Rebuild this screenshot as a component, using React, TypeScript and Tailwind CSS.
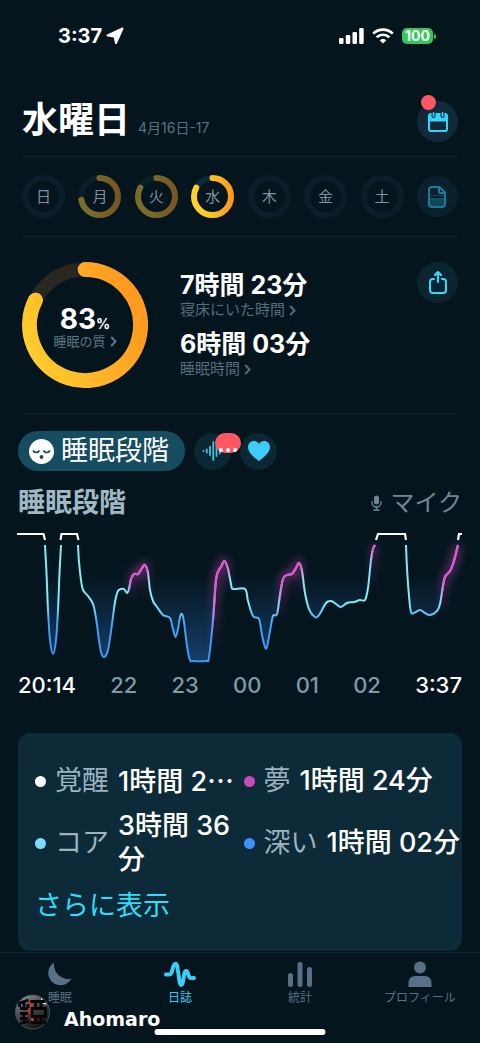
import { useState } from 'react';
import type { ReactNode } from 'react';

type Point = [number, number];

const days = [
  { label: '日', score: 0 },
  { label: '月', score: 72 },
  { label: '火', score: 83 },
  { label: '水', score: 83 },
  { label: '木', score: 0 },
  { label: '金', score: 0 },
  { label: '土', score: 0 },
];

const hours = ['20:14', '22', '23', '00', '01', '02', '3:37'];

const sleepRuns: Point[][] = [
  [[28, 17], [29.5, 45], [31, 82], [33, 112], [36, 126], [39, 112], [41, 82], [42.5, 45], [44, 17]],
  [
    [61, 17], [62, 34], [64, 52], [66, 62], [71, 68], [76, 76], [79, 90], [82, 112], [84, 124], [87, 129], [91, 122],
    [95, 96], [98, 74], [101, 63], [104, 61], [107, 61], [110, 65], [112, 61], [114, 51], [117, 46], [121, 46],
    [125, 40], [128, 37], [131, 45], [133, 62], [136, 73], [140, 79], [146, 87], [153, 90], [156, 101], [158.5, 109],
    [161, 101], [163, 89], [165, 86], [167, 94], [170, 118], [173, 132], [176, 133], [189, 133], [192, 129],
    [196, 92], [199, 52], [202, 42], [204, 39], [207.5, 33], [211, 41], [214, 56], [216, 61], [228, 61], [231, 73],
    [236, 88], [242, 91], [245, 107], [248, 119], [250, 119], [253, 103], [256, 88], [260, 86], [263, 67], [266, 51],
    [270, 47], [275, 46], [279, 40], [282, 35], [285, 43], [288, 65], [292, 81], [298, 89], [302, 87], [309, 75],
    [314, 73], [319, 76], [324, 79], [330, 75], [337, 74], [343, 72], [348, 72], [351, 60], [354, 32], [356, 21],
    [358, 17],
  ],
  [
    [389, 17], [390, 40], [392, 68], [394, 84], [397, 85], [403, 82], [408, 85], [413, 87], [420, 83], [423, 76],
    [426, 58], [428, 49], [433, 43], [436, 36], [439, 25], [441, 17],
  ],
];

const awakeRuns = ['M0 6H26.5L28 12', 'M43.500 12L44.500 6H60L61.500 12', 'M359 12L361 6H388L389 12', 'M441 12L442 6H445'];

// x positions where the line fades in and out of dream sleep
const dreamRanges = [
  [111, 114, 130, 132],
  [195, 198, 210, 213],
  [261, 265, 284, 286],
  [353, 356, 360, 361],
  [423, 427, 443, 445],
];

const CHART_WIDTH = 445;
const CHART_HEIGHT = 136;

// Catmull-Rom through the samples
function toPath(points: Point[]) {
  let d = `M${points[0][0]} ${points[0][1]}`;
  for (let i = 0; i < points.length - 1; i++) {
    const p0 = points[i - 1] || points[i];
    const p1 = points[i];
    const p2 = points[i + 1];
    const p3 = points[i + 2] || p2;
    d += `C${p1[0] + (p2[0] - p0[0]) / 6} ${p1[1] + (p2[1] - p0[1]) / 6} ${p2[0] - (p3[0] - p1[0]) / 6} ${
      p2[1] - (p3[1] - p1[1]) / 6
    } ${p2[0]} ${p2[1]}`;
  }
  return d;
}

function StatusBar() {
  return (
    <div className="h-[72px] pl-[58px] pr-11 flex items-center justify-between text-white">
      <div className="flex items-center gap-1">
        <span className="text-xl leading-6 font-bold">3:37</span>
        <svg width="18" height="18" viewBox="0 0 18 18" fill="currentColor" stroke="currentColor" strokeLinejoin="round">
          <path d="M16.500 1.500 10 16 8.500 9.500 1.500 8.500Z" strokeWidth="2" />
        </svg>
      </div>
      <div className="flex items-center gap-2">
        <svg width="25" height="16" viewBox="0 0 25 16" fill="currentColor">
          <rect x="0" y="10" width="4.500" height="6" rx="1.300" />
          <rect x="6.800" y="7" width="4.500" height="9" rx="1.300" />
          <rect x="13.500" y="4" width="4.500" height="12" rx="1.300" />
          <rect x="20.200" y="0" width="4.500" height="16" rx="1.300" />
        </svg>
        <svg width="22" height="16" viewBox="0 0 22 16" fill="none" stroke="currentColor" strokeWidth="2.700">
          <path d="M1.200 5.600a14 14 0 0 1 19.600 0" />
          <path d="M4.700 9.300a9 9 0 0 1 12.600 0" />
          <path d="M11 15.600 7.700 12.200a4.800 4.800 0 0 1 6.600 0Z" fill="currentColor" stroke="none" />
        </svg>
        <div className="flex items-center gap-px">
          <span className="h-4 w-[31px] rounded-[5px] bg-[#34c759] text-center text-sm leading-4 font-bold">100</span>
          <span className="h-[5px] w-0.5 rounded-r-full bg-[#34c759]" />
        </div>
      </div>
    </div>
  );
}

function Chevron() {
  return (
    <svg width="7" height="11" viewBox="0 0 7 11" fill="none" stroke="currentColor" strokeWidth="2">
      <path d="m1.200 1 4.300 4.500L1.200 10" />
    </svg>
  );
}

function DayRing({ label, score, selected, onClick }: { label: string; score: number; selected: boolean; onClick: () => void }) {
  return (
    <button onClick={onClick} className="grid size-[43px] place-items-center">
      <svg viewBox="0 0 43 43" className="col-start-1 row-start-1 size-full -rotate-90" fill="none" strokeWidth="6">
        <circle cx="21.500" cy="21.500" r="18.500" stroke={selected ? '#0d2838' : '#0a1e29'} />
        {score > 0 && (
          <circle
            cx="21.500"
            cy="21.500"
            r="18.500"
            pathLength="100"
            strokeDasharray={`${score} 100`}
            strokeLinecap="round"
            stroke="url(#day-gradient)"
            opacity={selected ? 1 : 0.45}
          />
        )}
      </svg>
      <span className="col-start-1 row-start-1 text-[15px] leading-5 text-[#7d929e]">{label}</span>
    </button>
  );
}

function QualityRing() {
  return (
    <div className="grid size-[126px] shrink-0 place-items-center">
      <svg viewBox="0 0 126 126" className="col-start-1 row-start-1 size-full" fill="none">
        <defs>
          <linearGradient id="quality-gradient" gradientUnits="userSpaceOnUse" x1="8" y1="85" x2="112" y2="40">
            <stop offset="0" stopColor="#ffcb2e" />
            <stop offset="1" stopColor="#ff9a20" />
          </linearGradient>
        </defs>
        <circle cx="63" cy="63" r="55.500" stroke="#2a2721" strokeWidth="14" />
        <path d="M63 7.500a55.500 55.500 0 1 1-49.500 30.500" stroke="#04151e" strokeWidth="17" strokeLinecap="round" />
        <path d="M63 7.500a55.500 55.500 0 1 1-49.500 30.500" stroke="url(#quality-gradient)" strokeWidth="15" strokeLinecap="round" />
      </svg>
      <div className="col-start-1 row-start-1 flex flex-col items-center pt-1">
        <div className="text-[28px] leading-7 font-bold text-white">
          83<span className="text-sm leading-4">%</span>
        </div>
        <button className="flex items-center gap-1 text-[13px] leading-4 text-[#5d7685]">
          睡眠の質
          <Chevron />
        </button>
      </div>
    </div>
  );
}

function Duration({ value, label }: { value: string; label: string }) {
  return (
    <div>
      <div className="text-[25px] leading-[34px] font-bold text-white">{value}</div>
      <button className="flex items-center gap-1 text-[15px] leading-4 text-[#546d7c]">
        {label}
        <Chevron />
      </button>
    </div>
  );
}

function SleepChart() {
  return (
    <svg viewBox={`1 0 ${CHART_WIDTH - 1} ${CHART_HEIGHT}`} className="mt-[5px] block w-full overflow-visible" fill="none">
      <defs>
        <linearGradient id="depth" gradientUnits="userSpaceOnUse" x1="0" y1="0" x2="0" y2={CHART_HEIGHT}>
          <stop offset="0.550" stopColor="#7debf8" />
          <stop offset="0.700" stopColor="#479ff6" />
          <stop offset="1" stopColor="#3f93f5" />
        </linearGradient>
        <linearGradient id="depth-fill" gradientUnits="userSpaceOnUse" x1="0" y1="0" x2="0" y2={CHART_HEIGHT}>
          <stop offset="0.350" stopColor="#17426f" stopOpacity="0" />
          <stop offset="1" stopColor="#17426f" stopOpacity="0.950" />
        </linearGradient>
        <linearGradient id="dream" gradientUnits="userSpaceOnUse" x1="0" y1="0" x2={CHART_WIDTH} y2="0">
          {dreamRanges.flatMap((range) =>
            range.map((x, i) => (
              <stop key={x} offset={x / CHART_WIDTH} stopColor="#e850cc" stopOpacity={i === 0 || i === 3 ? 0 : 1} />
            ))
          )}
        </linearGradient>
        <filter id="glow" filterUnits="userSpaceOnUse" x="-10" y="-10" width="470" height="160">
          <feGaussianBlur stdDeviation="5" />
        </filter>
      </defs>
      {sleepRuns.map((run, i) => {
        const d = toPath(run);
        return (
          <g key={i} strokeWidth="2" strokeLinejoin="round">
            <path d={`${d}Z`} fill="url(#depth-fill)" />
            <path d={d} stroke="url(#dream)" strokeWidth="8" opacity="0.400" filter="url(#glow)" />
            <path d={d} stroke="url(#depth)" />
            <path d={d} stroke="url(#dream)" strokeWidth="2.200" />
          </g>
        );
      })}
      {awakeRuns.map((d) => (
        <path key={d} d={d} stroke="#fdfdf8" strokeWidth="2.200" />
      ))}
    </svg>
  );
}

function Stage({ color, label, children }: { color: string; label: string; children: ReactNode }) {
  return (
    <div className="flex min-w-0 items-center gap-[9px]">
      <span className={`size-[11px] shrink-0 rounded-full ${color}`} />
      <dt className="shrink-0 text-[#9bb3bf]">{label}</dt>
      <dd className="font-medium text-white">{children}</dd>
    </div>
  );
}

function NavItem({ label, active, onClick, children }: { label: string; active: boolean; onClick: () => void; children: ReactNode }) {
  return (
    <button
      onClick={onClick}
      className={`flex flex-col items-center gap-[3px] pt-2 ${active ? 'text-[#3bcdf6]' : 'text-[#587186]'}`}
    >
      <svg width="32" height="26" viewBox="0 0 32 26" fill="currentColor">
        {children}
      </svg>
      <span className="text-xs leading-4">{label}</span>
    </button>
  );
}

function Watermark() {
  return (
    <div className="absolute bottom-3 left-[15px] flex items-end gap-[14px]">
      <svg width="35" height="37" viewBox="0 0 35 37" fill="none">
        <defs>
          <linearGradient id="badge" x1="0" y1="0" x2="0.600" y2="1">
            <stop offset="0" stopColor="#a2a5a7" />
            <stop offset="0.450" stopColor="#4b5053" />
            <stop offset="1" stopColor="#101314" />
          </linearGradient>
        </defs>
        <circle cx="17.500" cy="18" r="17" fill="url(#badge)" stroke="#465057" />
        <path d="m26 4 6 7-6-2Z" fill="#eef1f2" />
        <path d="M13 8l3 2v4l-2 3 3 3v5l2 3M11 19v6" stroke="#cf2f3d" strokeWidth="2.500" />
        <g stroke="#060606" strokeWidth="2.800" strokeLinejoin="round">
          <path d="M4.500 13V9l9-3M9 8v6M5 14.500h8M13 10v4M5 19.500h8M9 19v11M5 24.500h8M5 29.500l9-2" />
          <path d="M15 7.500h15M20.500 8v6M26 8v6M17 14.500h13.500v8H17ZM20.500 22v6M26 22v6M15.500 28.500H31" />
        </g>
      </svg>
      <span className="font-['DejaVu_Sans',sans-serif] text-[19px] leading-6 font-bold text-white">Ahomaro</span>
    </div>
  );
}

export default function App() {
  const [day, setDay] = useState('水');
  const [tab, setTab] = useState('日誌');

  return (
    <div
      lang="ja"
      className="relative flex min-h-screen flex-col bg-[#04151e] font-['Inter','Noto_Sans_CJK_JP',sans-serif] text-white"
    >
      <StatusBar />

      <main className="flex flex-1 flex-col">
        <div className="mx-[22px]">
          <header className="flex items-center justify-between border-b border-[#0d222c] pt-[29px] pb-[14px]">
            <h1 className="flex items-baseline gap-2 pb-1 text-4xl leading-9 font-bold">
              水曜日
              <span className="text-sm leading-5 font-normal text-[#587180]">4月16日-17</span>
            </h1>
            <button aria-label="カレンダー" className="relative grid size-[41px] place-items-center rounded-full bg-[#12293a]">
              <svg width="20" height="20" viewBox="0 0 20 20" fill="none" stroke="#35d5fb">
                <rect x="1" y="2" width="18" height="17" rx="2" strokeWidth="2" />
                <path d="M1 3h18v6H1Z" fill="#35d5fb" />
                <path d="M5.500 0v4M14.500 0v4" stroke="#12293a" strokeWidth="4" strokeLinecap="round" />
                <path d="M5.500 1v3M14.500 1v3" strokeWidth="1.800" strokeLinecap="round" />
              </svg>
              <span className="absolute -top-1.5 left-1 size-[15px] rounded-full bg-[#ff5863]" />
            </button>
          </header>

          <div className="flex items-center justify-between border-b border-[#0d222c] py-[18px]">
            <svg className="absolute size-0">
              <defs>
                <linearGradient id="day-gradient" x1="0" y1="0" x2="0" y2="1">
                  <stop offset="0" stopColor="#ffd02e" />
                  <stop offset="0.400" stopColor="#ffc728" />
                  <stop offset="1" stopColor="#ff9a18" />
                </linearGradient>
              </defs>
            </svg>
            {days.map((d) => (
              <DayRing key={d.label} {...d} selected={d.label === day} onClick={() => setDay(d.label)} />
            ))}
            <button aria-label="メモ" className="grid size-[41px] place-items-center rounded-full bg-[#0a202c]">
              <svg width="18" height="22" viewBox="0 0 18 22" fill="none" stroke="#1d7996" strokeWidth="2">
                <path d="M1 12h16v6a3 3 0 0 1-3 3H4a3 3 0 0 1-3-3Z" fill="#124659" stroke="none" />
                <path d="M4 1h7.500L17 6.500V18a3 3 0 0 1-3 3H4a3 3 0 0 1-3-3V4a3 3 0 0 1 3-3Z" />
                <path d="M11 1v4.500a1.500 1.500 0 0 0 1.500 1.500H17" />
                <path d="M2 9.500h14M2 13h14" strokeWidth="1" opacity="0.400" />
              </svg>
            </button>
          </div>

          <section className="flex items-start border-b border-[#0d222c] py-[25px]">
            <QualityRing />
            <div className="ml-8 flex flex-1 flex-col gap-[9px] pt-1.5">
              <Duration value="7時間 23分" label="寝床にいた時間" />
              <Duration value="6時間 03分" label="睡眠時間" />
            </div>
            <button aria-label="共有" className="grid size-[41px] place-items-center rounded-full bg-[#0b2430]">
              <svg
                width="18"
                height="24"
                viewBox="0 0 18 24"
                fill="none"
                stroke="#38d9f8"
                strokeWidth="2"
                strokeLinecap="round"
                strokeLinejoin="round"
              >
                <path d="M5 8H4a3 3 0 0 0-3 3V19a3 3 0 0 0 3 3h10a3 3 0 0 0 3-3v-8a3 3 0 0 0-3-3h-1" />
                <path d="M9 11V2M6 4l3-3 3 3" strokeWidth="2.200" />
              </svg>
            </button>
          </section>
        </div>

        <section className="mx-[18px]">
          <div className="flex items-center gap-[9px] pt-[17px]">
            <button className="flex h-10 items-center gap-[7px] rounded-full bg-[#164c60] pr-4 pl-[11px] text-[27px] leading-9">
              <svg width="25" height="25" viewBox="0 0 25 25" fill="none" stroke="#164c60" strokeWidth="1.700" strokeLinecap="round">
                <circle cx="12.500" cy="12.500" r="12.500" fill="#fff" stroke="none" />
                <path d="M4.500 12c1 2 4.500 2 5.500 0M15 12c1 2 4.500 2 5.500 0" />
                <circle cx="12.500" cy="18" r="1.900" fill="#164c60" stroke="none" />
              </svg>
              睡眠段階
            </button>
            <button aria-label="音声" className="relative grid size-[37px] place-items-center rounded-full bg-[#0b2733]">
              <svg width="22" height="20" viewBox="0 0 22 20" stroke="#3cc4e6" strokeWidth="1.800" strokeLinecap="round">
                <path d="M1.500 9.800v.4M4.800 8.500v3M8 6v8M11.300 1v18M14.500 5v10M17.800 7.500v5M21 9.500v1" />
              </svg>
              <span className="absolute top-0 left-[21px] flex h-5 w-[26px] items-end justify-center gap-[3px] rounded-[10px] bg-[#ff5863] pb-px">
                <span className="size-1 rounded-full bg-white" />
                <span className="size-1 rounded-full bg-white" />
                <span className="size-1 rounded-full bg-white" />
              </span>
            </button>
            <button aria-label="心拍数" className="grid size-[37px] place-items-center rounded-full bg-[#0b2733]">
              <svg width="22" height="20" viewBox="0 0 22 20" fill="#3fcdfc">
                <path d="M11 20C9.500 19 0 12.500 0 6.300 0 2.500 2.700 0 6 0c2.200 0 4 1.200 5 3 1-1.800 2.800-3 5-3 3.300 0 6 2.500 6 6.300C22 12.500 12.500 19 11 20Z" />
              </svg>
            </button>
          </div>

          <div className="mt-3 flex items-center justify-between leading-10">
            <h2 className="text-[27px] font-bold text-[#9fb8c3]">睡眠段階</h2>
            <button className="flex items-center gap-2 text-2xl leading-10 text-[#6c8897]">
              <svg width="11" height="16" viewBox="0 0 11 16" fill="none" stroke="currentColor" strokeWidth="1.300">
                <rect x="3" y="0.500" width="5" height="9" rx="2.500" fill="currentColor" stroke="none" />
                <path d="M1 6v1.500a4.500 4.500 0 0 0 9 0V6M5.500 12v3M2.500 15h6" />
              </svg>
              マイク
            </button>
          </div>

          <SleepChart />

          <div className="mt-[7px] flex justify-between text-[22px] leading-7 font-medium text-[#8099a5]">
            {hours.map((h) => (
              <span key={h} className="first:text-white last:text-white">
                {h}
              </span>
            ))}
          </div>

          <div className="mt-[34px] rounded-xl bg-[#0c2a37] pt-[30px] pr-2.5 pb-7 pl-[17px]">
            <dl className="grid grid-cols-2 gap-y-2.5 text-[27px] leading-[34px]">
              <Stage color="bg-white" label="覚醒">
                <span className="whitespace-nowrap">
                  1時間 2<span className="font-['Noto_Sans_CJK_JP',sans-serif]">…</span>
                </span>
              </Stage>
              <Stage color="bg-[#c84db9]" label="夢">
                <span className="whitespace-nowrap">1時間 24分</span>
              </Stage>
              <Stage color="bg-[#78dcfa]" label="コア">
                3時間 36分
              </Stage>
              <Stage color="bg-[#3f92fb]" label="深い">
                <span className="whitespace-nowrap">1時間 02分</span>
              </Stage>
            </dl>
            <button className="mt-3 block text-[27px] leading-[34px] text-[#30dcfb]">さらに表示</button>
          </div>
        </section>
      </main>

      <nav className="grid h-[91px] grid-cols-4 items-start border-t border-[#10262f]">
        <NavItem label="睡眠" active={tab === '睡眠'} onClick={() => setTab('睡眠')}>
          <path d="M10 1.500a12.300 12.300 0 1 0 17.500 16C19 20 9 13 10 1.500Z" />
        </NavItem>
        <NavItem label="日誌" active={tab === '日誌'} onClick={() => setTab('日誌')}>
          <path
            d="M2 13.500H5c2 0 2.500-1 3.500-5 1.300-7 4.500-8 5.300 0l1.700 12c.8 4.500 2.700 4.500 3.500 0l1.200-7c.7-4.500 2.800-4.500 3.800-1 .8 3.500 1.500 4.500 3 4.500h3"
            fill="none"
            stroke="currentColor"
            strokeWidth="4"
            strokeLinecap="round"
            strokeLinejoin="round"
          />
        </NavItem>
        <NavItem label="統計" active={tab === '統計'} onClick={() => setTab('統計')}>
          <rect x="4" y="12" width="5" height="14" rx="2.500" />
          <rect x="13.500" y="1" width="5" height="25" rx="2.500" />
          <rect x="23" y="6" width="5" height="20" rx="2.500" />
        </NavItem>
        <NavItem label="プロフィール" active={tab === 'プロフィール'} onClick={() => setTab('プロフィール')}>
          <circle cx="16" cy="6.500" r="6" />
          <path d="M4.500 26v-4c0-4.500 3-7 7-7h9c4 0 7 2.500 7 7v4Z" />
        </NavItem>
      </nav>

      <div className="absolute bottom-2 left-1/2 h-1.5 w-[171px] -translate-x-1/2 rounded-full bg-white" />
      <Watermark />
    </div>
  );
}
